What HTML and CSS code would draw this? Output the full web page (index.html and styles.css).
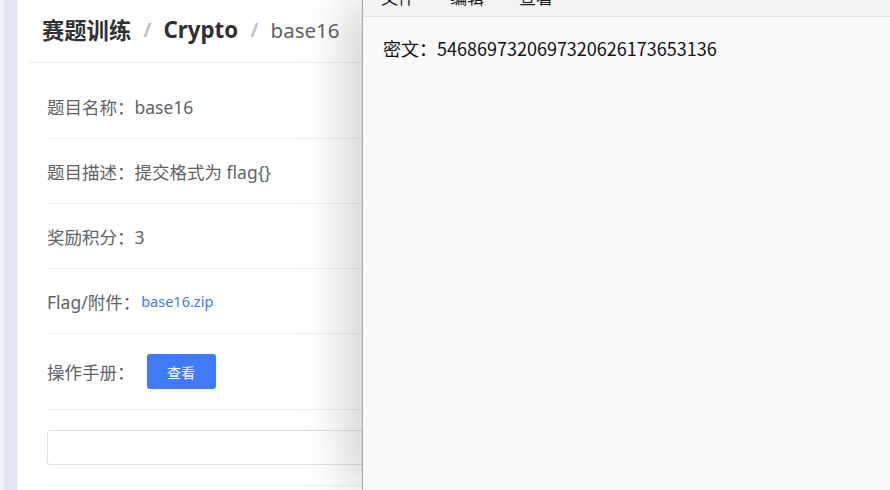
FILE: index.html
```html
<!DOCTYPE html>
<html lang="zh">
<head>
<meta charset="utf-8">
<link rel="stylesheet" href="styles.css">
</head>
<body>
<div class="page">
  <div class="strip-a"></div>
  <div class="strip-b"></div>
  <main class="card">
    <header class="crumbs">
      <span class="crumb strong">赛题训练</span>
      <span class="sep">/</span>
      <span class="crumb strong">Crypto</span>
      <span class="sep">/</span>
      <span class="crumb">base16</span>
    </header>
    <section class="rows">
      <div class="row">题目名称：base16</div>
      <div class="row">题目描述：提交格式为 flag{}</div>
      <div class="row">奖励积分：3</div>
      <div class="row">Flag/附件：<a class="link" href="#">base16.zip</a></div>
      <div class="row tall">操作手册：<button class="btn">查看</button></div>
      <div class="row tall"><input class="field" type="text"></div>
    </section>
  </main>
</div>
<div class="notepad">
  <nav class="menubar">
    <span class="menu">文件</span>
    <span class="menu">编辑</span>
    <span class="menu">查看</span>
  </nav>
  <div class="doc">密文：5468697320697320626173653136</div>
</div>
</body>
</html>
```
FILE: styles.css
```css
* { box-sizing: border-box; }
html, body { margin: 0; padding: 0; height: 100%; overflow: hidden; }
body {
  font-family: "Noto Sans", "Noto Sans CJK SC", sans-serif;
  background: #fff;
}
.page { display: flex; height: 490px; }
.strip-a { width: 4px; background: #f1f1f4; }
.strip-b { width: 13px; background: #dfe5f2; }
.card { flex: 1; background: #fff; padding-left: 12px; }
.crumbs {
  height: 63px;
  border-bottom: 1px solid #ebeef5;
  display: flex;
  align-items: center;
  padding-left: 13px;
  padding-bottom: 3px;
  font-size: 22.3px;
  color: #606266;
}
.crumb.strong { font-weight: 700; color: #303133; }
.crumb:last-child { font-size: 20.5px; }
.sep { color: #c0c4cc; font-weight: 700; margin: 0 12px; font-size: 20px; }
.rows { padding: 11px 0 0 18px; }
.row {
  height: 65px;
  border-bottom: 1px solid #ebeef5;
  display: flex;
  align-items: center;
  font-size: 17.5px;
  color: #606266;
}
.row.tall { height: 76px; }
.link { color: #3f78f6; font-size: 14.5px; text-decoration: none; margin-left: 1px; }
.btn {
  margin-left: 12px;
  width: 69px;
  height: 35px;
  border: none;
  border-radius: 3px;
  background: #3f7bfb;
  color: #fff;
  font-family: "Noto Sans CJK SC", sans-serif;
  font-size: 14px;
}
.field {
  width: 100%;
  height: 35px;
  border: 1px solid #dcdfe6;
  border-radius: 3px;
  background: #fff;
}
.notepad {
  position: absolute;
  left: 362px;
  top: 0;
  right: 0;
  bottom: 0;
  background: #f9f9f9;
  border-left: 1px solid #a8a8a8;
  box-shadow: -12px 0 50px rgba(0, 0, 0, 0.2);
  font-family: "Noto Sans CJK SC", sans-serif;
}
.menubar {
  height: 17px;
  overflow: hidden;
  background: #f3f3f3;
  border-bottom: 1px solid #e4e4e4;
  display: flex;
  padding-left: 18px;
  gap: 35px;
}
.menu {
  font-size: 17px;
  line-height: 20px;
  margin-top: -13px;
  color: #1a1a1a;
}
.doc {
  padding: 18px 0 0 20px;
  font-size: 18px;
  line-height: 26px;
  color: #111;
}
```
